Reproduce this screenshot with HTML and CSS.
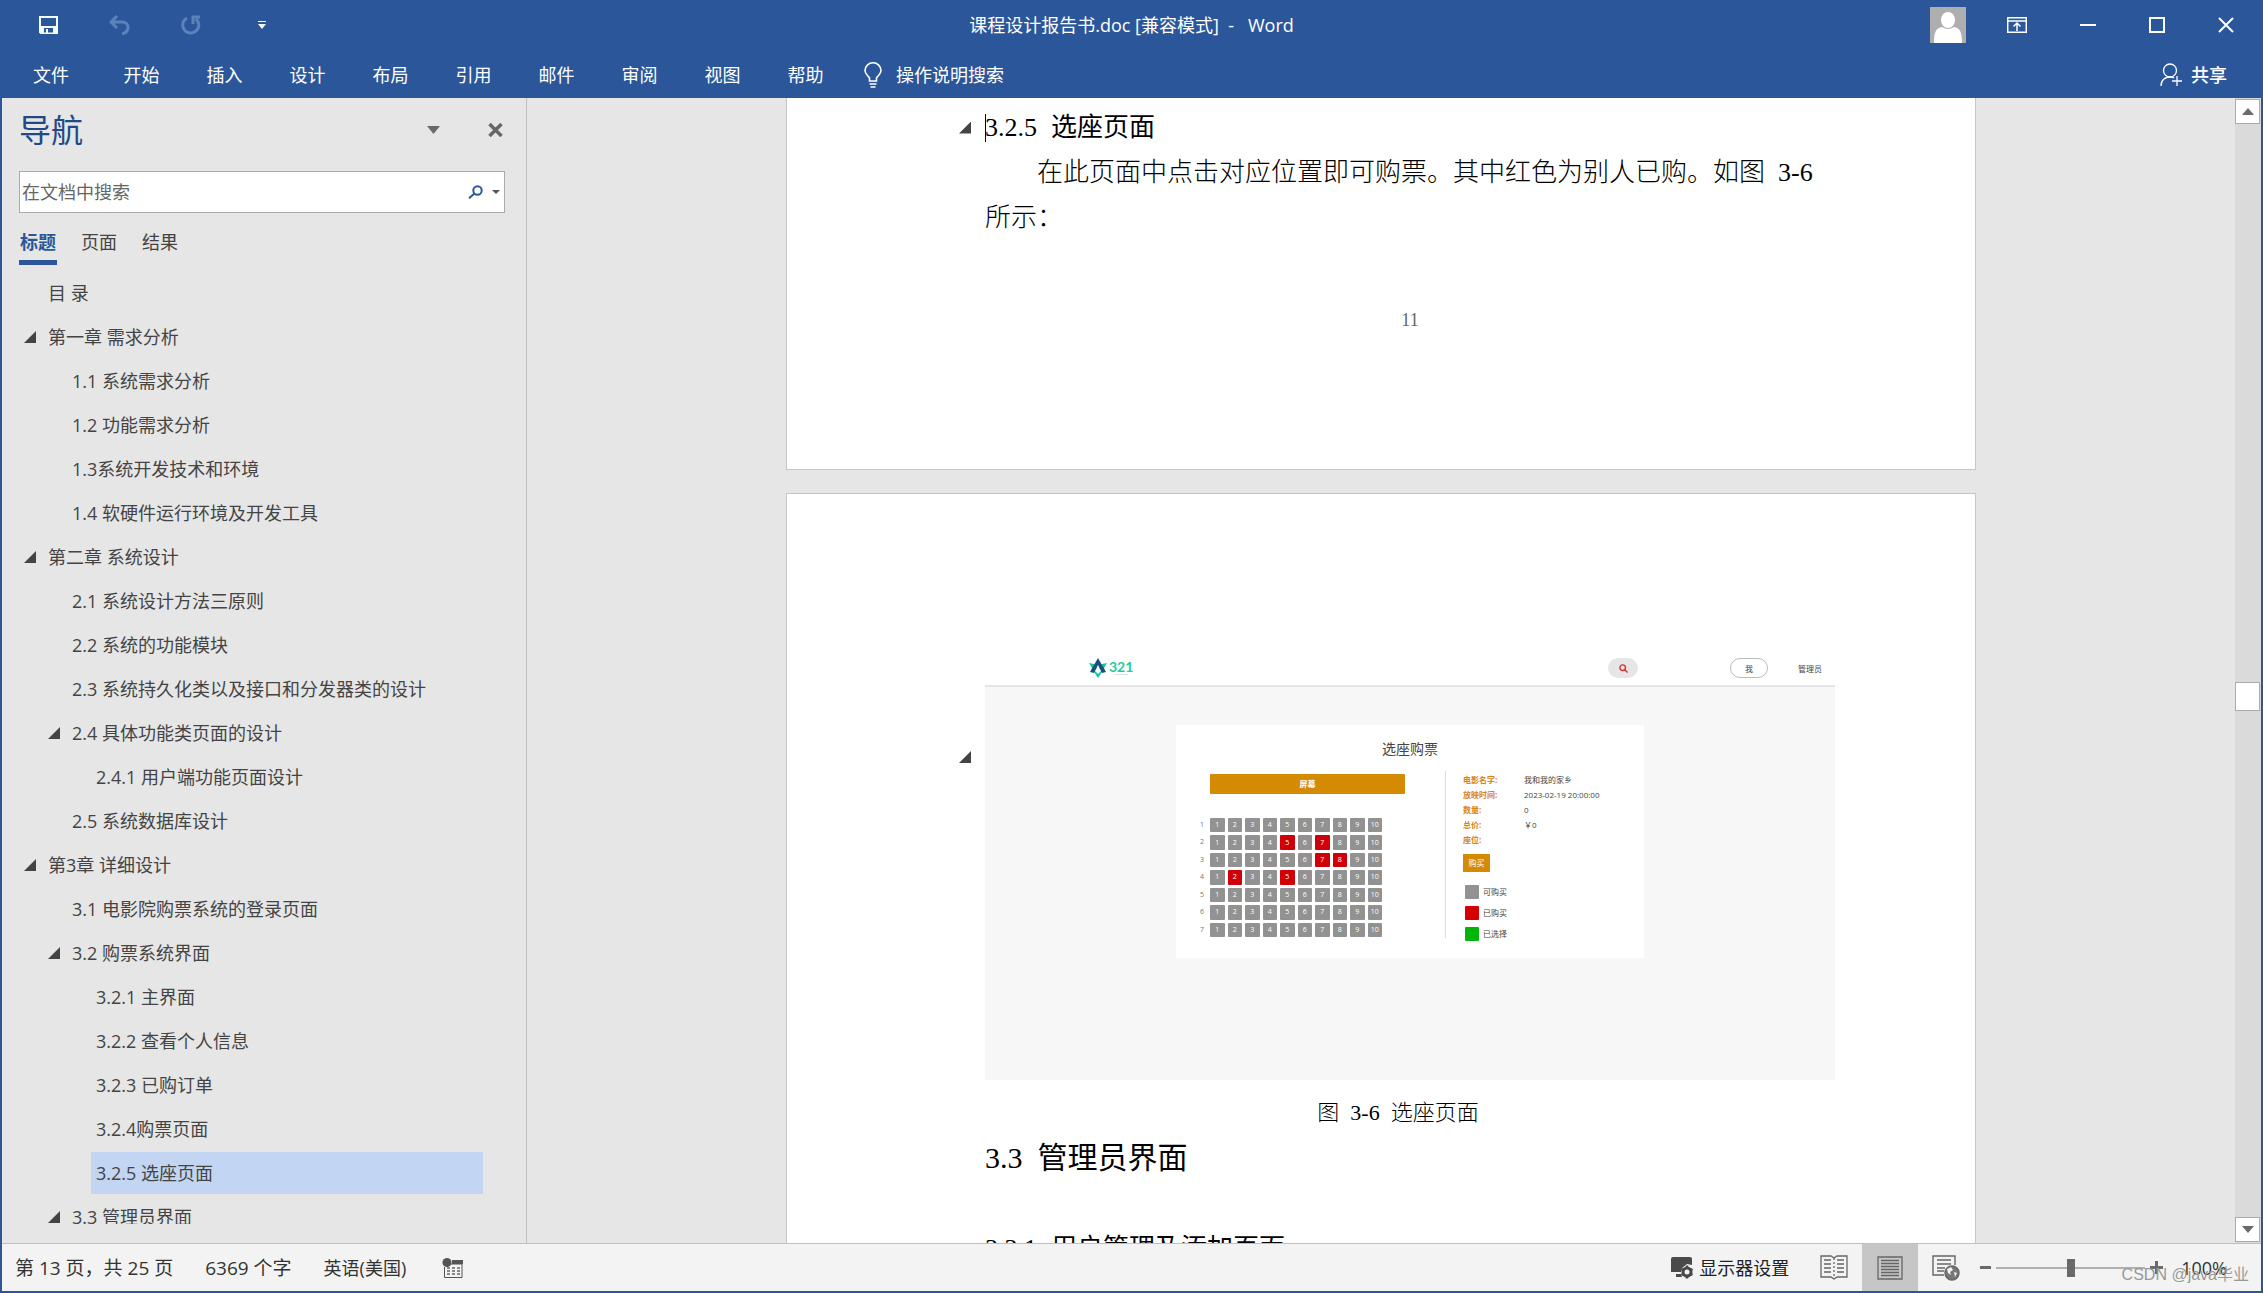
FILE: index.html
```html
<!DOCTYPE html>
<html lang="zh-CN">
<head>
<meta charset="utf-8">
<title>课程设计报告书.doc [兼容模式] - Word</title>
<link rel="stylesheet" href="styles.css">
</head>
<body>
<div class="window">
  <header class="ribbon">
    <div class="titlebar">
      <div class="quick">
        <button class="icon-btn" aria-label="保存"><svg width="20" height="20" viewBox="0 0 20 20"><path d="M0 1h19v18H1.500L0 17.500z" fill="#f4fbff"/><path d="M2 3h15v8H2zM5 13h9v4.500H9V14H7v3.500H5z" fill="#2b579a"/></svg></button>
        <button class="icon-btn" aria-label="撤消"><svg width="22" height="20" viewBox="0 0 22 20" fill="none" stroke="#5c82b9" stroke-width="3"><path d="M8 1L2 7l6 6M2 7h11c8 0 8 10 0 12"/></svg></button>
        <button class="icon-btn" aria-label="重复"><svg width="20" height="20" viewBox="0 0 20 20" fill="none" stroke="#5c82b9" stroke-width="3"><path d="M6 3a8 8 0 1 0 9 1M11 2h8M12 1v8"/></svg></button>
        <button class="icon-btn customize" aria-label="自定义快速访问工具栏"><svg width="8" height="8" viewBox="0 0 8 8"><path d="M0 0h8v1H0zM0 3h8L4 8z" fill="#fff"/></svg></button>
      </div>
      <h1 class="title">课程设计报告书.doc [兼容模式]&nbsp; -&nbsp;&nbsp; Word</h1>
      <div class="controls">
        <button class="icon-btn" aria-label="帐户"><svg width="36" height="36" viewBox="0 0 36 36"><path d="M0 0h36v36H0z" fill="#aeaeae"/><ellipse cx="18" cy="13" rx="7" ry="8" fill="#fff"/><path d="M4 36c0-11 2-15 8-16q6 4 12 0c6 1 8 5 8 16z" fill="#fff"/></svg></button>
        <button class="icon-btn" aria-label="功能区显示选项"><svg width="20" height="16" viewBox="0 0 20 16" fill="none" stroke="#fff" stroke-width="1.500"><path d="M.7.7h18.600v14.600H.7zM.7 4h18.600M10 14V6M6.500 9.500L10 6l3.500 3.500"/></svg></button>
        <button class="icon-btn" aria-label="最小化"><svg width="16" height="16" viewBox="0 0 16 16"><path d="M0 7h16v2H0z" fill="#fff"/></svg></button>
        <button class="icon-btn" aria-label="最大化"><svg width="16" height="16" viewBox="0 0 16 16"><path d="M1 1h14v14H1z" fill="none" stroke="#fff" stroke-width="2"/></svg></button>
        <button class="icon-btn" aria-label="关闭"><svg width="16" height="16" viewBox="0 0 16 16"><path d="M1 1l14 14M15 1L1 15" stroke="#fff" stroke-width="2"/></svg></button>
      </div>
    </div>
    <nav class="menu">
      <button class="menu-tab menu-file">文件</button>
      <button class="menu-tab">开始</button>
      <button class="menu-tab">插入</button>
      <button class="menu-tab">设计</button>
      <button class="menu-tab">布局</button>
      <button class="menu-tab">引用</button>
      <button class="menu-tab">邮件</button>
      <button class="menu-tab">审阅</button>
      <button class="menu-tab">视图</button>
      <button class="menu-tab">帮助</button>
      <button class="tell-me"><svg width="18" height="26" viewBox="0 0 18 26" fill="none" stroke="#fff" stroke-width="1.600"><path d="M5.500 19v-3C4 13.500 1 12 1 8.500a8 7.700 0 0 1 16 0c0 3.500-3 5-4.500 7.500v3zM5.500 22h7M6.500 25h5"/></svg>操作说明搜索</button>
      <button class="share"><svg width="23" height="24" viewBox="0 0 23 24" fill="none" stroke="#fff" stroke-width="1.300"><circle cx="10" cy="7.500" r="6.500"/><path d="M1 23c0-6 4-9 9-9 2 0 3 0 4 1M17 13v10M12 18h10"/></svg>共享</button>
    </nav>
  </header>

  <main class="workspace">
    <aside class="nav-pane">
      <div class="nav-head">
        <h2 class="nav-title">导航</h2>
        <button class="icon-btn" aria-label="任务窗格选项"><svg width="13" height="8" viewBox="0 0 13 8"><path d="M0 0h13L6.500 8z" fill="#6a6a6a"/></svg></button>
        <button class="icon-btn" aria-label="关闭导航"><svg width="15" height="14" viewBox="0 0 15 14"><path d="M1.500 1l12 12M13.500 1l-12 12" stroke="#666" stroke-width="3.500"/></svg></button>
      </div>
      <div class="search">
        <input class="search-input" type="text" placeholder="在文档中搜索" aria-label="在文档中搜索">
        <button class="icon-btn" aria-label="搜索"><svg width="15" height="14" viewBox="0 0 15 14" fill="none" stroke="#2b579a" stroke-width="2"><circle cx="9.500" cy="5.500" r="4.200"/><path d="M6.500 8.500L1 13.300"/></svg></button>
        <button class="icon-btn" aria-label="搜索选项"><svg width="8" height="4" viewBox="0 0 8 4"><path d="M0 0h8L4 4z" fill="#555"/></svg></button>
      </div>
      <div class="nav-tabs">
        <button class="nav-tab active">标题</button>
        <button class="nav-tab">页面</button>
        <button class="nav-tab">结果</button>
      </div>
      <ul class="tree">
        <li class="l1"><a href="#">目 录</a></li>
        <li class="l1 open"><a href="#">第一章 需求分析</a></li>
        <li class="l2"><a href="#">1.1 系统需求分析</a></li>
        <li class="l2"><a href="#">1.2 功能需求分析</a></li>
        <li class="l2"><a href="#">1.3系统开发技术和环境</a></li>
        <li class="l2"><a href="#">1.4 软硬件运行环境及开发工具</a></li>
        <li class="l1 open"><a href="#">第二章 系统设计</a></li>
        <li class="l2"><a href="#">2.1 系统设计方法三原则</a></li>
        <li class="l2"><a href="#">2.2 系统的功能模块</a></li>
        <li class="l2"><a href="#">2.3 系统持久化类以及接口和分发器类的设计</a></li>
        <li class="l2 open"><a href="#">2.4 具体功能类页面的设计</a></li>
        <li class="l3"><a href="#">2.4.1 用户端功能页面设计</a></li>
        <li class="l2"><a href="#">2.5 系统数据库设计</a></li>
        <li class="l1 open"><a href="#">第3章 详细设计</a></li>
        <li class="l2"><a href="#">3.1 电影院购票系统的登录页面</a></li>
        <li class="l2 open"><a href="#">3.2 购票系统界面</a></li>
        <li class="l3"><a href="#">3.2.1 主界面</a></li>
        <li class="l3"><a href="#">3.2.2 查看个人信息</a></li>
        <li class="l3"><a href="#">3.2.3 已购订单</a></li>
        <li class="l3"><a href="#">3.2.4购票页面</a></li>
        <li class="l3"><a class="current" href="#">3.2.5 选座页面</a></li>
        <li class="l2 open"><a href="#">3.3 管理员界面</a></li>
      </ul>
    </aside>

    <section class="canvas">
      <article class="page page-first">
        <h3 class="doc-h3"><i class="fold"></i><i class="caret"></i><span>3.2.5</span><span class="cjk">选座页面</span></h3>
        <p class="doc-p">在此页面中点击对应位置即可购票。其中红色为别人已购。如图&nbsp; 3-6 所示：</p>
        <p class="page-no">11</p>
      </article>
      <article class="page page-next">
        <div class="figure">
          <i class="fold"></i>
          <div class="shot">
            <div class="shot-head">
              <svg class="logo" width="18" height="20" viewBox="0 0 18 20"><path d="M0 5l5 1 4 5 4-5 5-1-3 5 1 3-3 1-4 6-4-6-3-1 1-3z" fill="#12c99b"/><path d="M9 0l8 14-4 1-4-8-4 8-4-1z" fill="#1c4f80"/><path d="M9 8l3 5-3 3-3-3z" fill="#fff"/></svg>
              <div class="brand"><b>321</b><small>MOVIE TICKET</small></div>
              <button class="pill pill-search" aria-label="搜索影片"><svg width="9" height="9" viewBox="0 0 9 9" fill="none" stroke="#d9302c" stroke-width="1.400"><circle cx="3.700" cy="3.700" r="2.800"/><path d="M5.800 5.800L8.500 8.500"/></svg></button>
              <button class="pill pill-user">我</button>
              <a class="admin" href="#">管理员</a>
            </div>
            <div class="shot-body">
              <div class="card">
                <h4 class="card-title">选座购票</h4>
                <div class="card-cols">
                  <div class="hall">
                    <div class="screen">屏幕</div>
                    <div class="seats">
                      <span>1</span><button>1</button><button>2</button><button>3</button><button>4</button><button>5</button><button>6</button><button>7</button><button>8</button><button>9</button><button>10</button>
                      <span>2</span><button>1</button><button>2</button><button>3</button><button>4</button><button class="sold">5</button><button>6</button><button class="sold">7</button><button>8</button><button>9</button><button>10</button>
                      <span>3</span><button>1</button><button>2</button><button>3</button><button>4</button><button>5</button><button>6</button><button class="sold">7</button><button class="sold">8</button><button>9</button><button>10</button>
                      <span>4</span><button>1</button><button class="sold">2</button><button>3</button><button>4</button><button class="sold">5</button><button>6</button><button>7</button><button>8</button><button>9</button><button>10</button>
                      <span>5</span><button>1</button><button>2</button><button>3</button><button>4</button><button>5</button><button>6</button><button>7</button><button>8</button><button>9</button><button>10</button>
                      <span>6</span><button>1</button><button>2</button><button>3</button><button>4</button><button>5</button><button>6</button><button>7</button><button>8</button><button>9</button><button>10</button>
                      <span>7</span><button>1</button><button>2</button><button>3</button><button>4</button><button>5</button><button>6</button><button>7</button><button>8</button><button>9</button><button>10</button>
                    </div>
                  </div>
                  <div class="order">
                    <dl class="facts">
                      <dt>电影名字:</dt><dd>我和我的家乡</dd>
                      <dt>放映时间:</dt><dd>2023-02-19 20:00:00</dd>
                      <dt>数量:</dt><dd>0</dd>
                      <dt>总价:</dt><dd>￥0</dd>
                      <dt>座位:</dt><dd></dd>
                    </dl>
                    <button class="buy">购买</button>
                    <ul class="legend">
                      <li><i></i>可购买</li>
                      <li><i class="sold"></i>已购买</li>
                      <li><i class="picked"></i>已选择</li>
                    </ul>
                  </div>
                </div>
              </div>
            </div>
          </div>
        </div>
        <p class="caption"><span>图</span><span>3-6</span><span>选座页面</span></p>
        <h2 class="doc-h2"><span>3.3</span><span class="cjk">管理员界面</span></h2>
        <h3 class="doc-h3 doc-h3-last"><span>3.3.1</span><span class="cjk">用户管理及添加页面</span></h3>
      </article>
    </section>

    <div class="scrollbar">
      <button class="scroll-btn" aria-label="向上滚动"><svg width="12" height="7" viewBox="0 0 12 7"><path d="M0 7h12L6 0z" fill="#6a6a6a"/></svg></button>
      <div class="track-before"></div>
      <div class="thumb"></div>
      <div class="track-after"></div>
      <button class="scroll-btn" aria-label="向下滚动"><svg width="12" height="7" viewBox="0 0 12 7"><path d="M0 0h12L6 7z" fill="#6a6a6a"/></svg></button>
    </div>
  </main>

  <footer class="status">
    <span class="count">第 13 页，共 25 页</span>
    <span class="count words">6369 个字</span>
    <span>英语(美国)</span>
    <button class="icon-btn macro" aria-label="宏录制"><svg width="21" height="20" viewBox="0 0 21 20"><path d="M10 2h11v4H10z" fill="#555"/><path d="M2.500 9v10.500h17.500V6H8" fill="none" stroke="#555"/><circle cx="5" cy="4.500" r="4.500" fill="#555"/><path d="M5 10h3M10 10h3M15 10h3M5 13h3M10 13h3M15 13h3M5 16h3M10 16h3M15 16h3" stroke="#666" stroke-width="1.500"/></svg></button>
    <button class="display"><svg width="23" height="22" viewBox="0 0 23 22"><path d="M0 2q0-2 2-2h17q2 0 2 2v6l-5-1-5 4-1 4H0zM5 17h5l1 3H5z" fill="#4a4a4a"/><circle cx="16" cy="15" r="4" fill="none" stroke="#4a4a4a" stroke-width="3"/><path d="M16 8.500v3M16 18.500v3M10.500 12l2.500 1.500M19 16.500l2.500 1.500M10.500 18l2.500-1.500M19 13.500l2.500-1.500" stroke="#4a4a4a" stroke-width="2.500"/></svg>显示器设置</button>
    <button class="view" aria-label="阅读视图"><svg width="28" height="25" viewBox="0 0 28 25" fill="none" stroke="#666" stroke-width="1.300"><path d="M1 1h10l3 2 3-2h10v21H17l-3 2-3-2H1zM4 5h7M4 9h7M4 13h7M4 17h7M17 5h7M17 9h7M17 13h7M17 17h7"/><path d="M14 3v20" stroke-dasharray="2 2"/></svg></button>
    <button class="view on" aria-label="页面视图"><svg width="26" height="24" viewBox="0 0 26 24" fill="none" stroke="#666" stroke-width="1.300"><path d="M1 1h24v22H1zM4 4.500h18M4 7.500h18M4 10.500h18M4 13.500h18M4 16.500h18M4 19.500h18"/></svg></button>
    <button class="view" aria-label="Web 版式视图"><svg width="28" height="26" viewBox="0 0 28 26" fill="none" stroke="#666" stroke-width="1.400"><path d="M12 20H1V1h22v9M5 5h14M5 9h14M5 13h8M5 16h7"/><circle cx="20" cy="18" r="7" fill="#777"/><path d="M15 14l4-2 2 3-3 2 1 3-3-2zM22 17l3 1-2 4z" fill="#f3f3f3" stroke="none"/></svg></button>
    <div class="zoom">
      <button class="icon-btn" aria-label="缩小"><svg width="11" height="3" viewBox="0 0 11 3"><path d="M0 0h11v3H0z" fill="#6a6a6a"/></svg></button>
      <input class="zoom-range" type="range" min="0" max="100" value="50" aria-label="显示比例">
      <button class="icon-btn" aria-label="放大"><svg width="13" height="13" viewBox="0 0 13 13"><path d="M5 0h3v5h5v3H8v5H5V8H0V5h5z" fill="#6a6a6a"/></svg></button>
      <span class="percent">100%</span>
    </div>
  </footer>
  <div class="watermark">CSDN @java毕业</div>
</div>
</body>
</html>
```
FILE: styles.css
```css
* { box-sizing: border-box; }
body {
  margin: 0;
  font: 18px/24px "Open Sans", "Noto Sans CJK SC", sans-serif;
  color: #444;
}
h1, h2, h3, h4, p, ul, dl, dd { margin: 0; padding: 0; font-weight: 400; }
ul { list-style: none; }
button { margin: 0; padding: 0; border: 0; background: none; font: inherit; color: inherit; }
a { color: inherit; text-decoration: none; }
svg { display: block; flex: none; }

.window {
  position: relative;
  display: flex;
  flex-direction: column;
  height: 100vh;
  border: solid #2b579a;
  border-width: 0 2px 2px;
  overflow: hidden;
}
.icon-btn { display: flex; flex: none; }

/* Title bar and ribbon tabs */
.ribbon { flex: none; background: #2b579a; color: #fff; }
.titlebar { display: grid; grid-template-columns: 1fr auto 1fr; align-items: center; height: 52px; padding-bottom: 2px; }
.quick { display: flex; align-items: center; gap: 50px; padding-left: 37px; }
.customize { margin-left: 7px; }
.title { font-size: 18px; line-height: 24px; }
.controls { display: flex; align-items: center; justify-content: flex-end; gap: 53px; padding-right: 27px; }
.controls .icon-btn:first-child { margin-right: -12px; }
.menu { display: flex; align-items: center; height: 46px; }
.menu-tab { width: 83px; height: 46px; }
.menu-file { width: 98px; }
.tell-me { display: flex; align-items: center; gap: 14px; margin-left: 17px; }
.share { display: flex; align-items: center; gap: 8px; margin-left: auto; padding-right: 34px; font-weight: 500; }

.workspace { flex: 1; min-height: 0; display: flex; background: #e6e6e6; }

/* Navigation pane */
.nav-pane {
  flex: none;
  width: 525px;
  padding: 0 21px 19px 17px;
  border-right: 1px solid #c0c0c0;
  display: flex;
  flex-direction: column;
}
.nav-head { display: flex; align-items: center; gap: 48px; height: 63px; padding-right: 2px; }
.nav-title { margin-right: auto; font-size: 32px; line-height: 40px; color: #1f4a86; }
.search {
  display: flex;
  align-items: center;
  gap: 9px;
  height: 42px;
  margin-top: 10px;
  padding-right: 4px;
  background: #fff;
  border: 1px solid #ababab;
}
.search-input { flex: 1; min-width: 0; padding: 0 2px; border: 0; outline: 0; background: none; font: inherit; }
.search-input::placeholder { color: #666; opacity: 1; }
.nav-tabs { display: flex; gap: 23px; margin-top: 15px; }
.nav-tab { height: 37px; padding: 0 1px 5px; border-bottom: 5px solid transparent; }
.nav-tab.active { color: #2b579a; font-weight: 700; border-color: #2b579a; }
.tree { flex: 1; min-height: 0; margin-top: 6px; overflow: hidden; }
.tree li { display: flex; align-items: center; height: 44px; padding-right: 22px; }
.tree a { flex: 1; height: 42px; padding-left: 5px; line-height: 42px; white-space: nowrap; }
.tree .current { background: #c2d5f2; }
.tree .l1 { padding-left: 24px; }
.tree .l2 { padding-left: 48px; }
.tree .l3 { padding-left: 72px; }
.tree .open::before {
  content: "";
  width: 12px;
  height: 12px;
  margin-left: -19px;
  margin-right: 7px;
  background: #444;
  clip-path: polygon(100% 0, 100% 100%, 0 100%);
}

/* Document */
.canvas {
  flex: 1;
  min-width: 0;
  display: flex;
  flex-direction: column;
  align-items: center;
  gap: 23px;
  overflow: hidden;
}
.page {
  flex: none;
  width: 100%;
  max-width: 1190px;
  padding: 0 140px 0 198px;
  background: #fff;
  border: 1px solid #c6c6c6;
  color: #000;
  font-family: "Liberation Serif", "Noto Sans CJK SC", serif;
}
.page-first { padding-top: 7px; padding-bottom: 137px; border-top: 0; }
.page-next { padding-top: 157px; padding-bottom: 138px; }
.fold { flex: none; width: 12px; height: 12px; margin: 0 14px 0 -26px; background: #444; clip-path: polygon(100% 0, 100% 100%, 0 100%); }
.caret { width: 1px; height: 28px; margin-right: -1px; background: #000; }
.doc-h3 { display: flex; align-items: center; font-size: 26px; line-height: 45px; }
.doc-h3 .cjk { margin-left: 14px; }
.doc-h3-last { margin-top: 41px; }
.doc-h2 { display: flex; gap: 15px; font-size: 30px; line-height: 54px; }
.cjk { font-weight: 400; }
.doc-p { font-size: 26px; line-height: 45px; text-indent: 52px; font-weight: 300; }
.page-no { margin-top: 68px; font-size: 18px; line-height: 24px; text-align: center; color: #666; }
.caption { display: flex; justify-content: center; gap: 11px; margin-top: 15px; padding-right: 24px; font-size: 22px; line-height: 36px; font-weight: 300; }

/* Ticketing site shown in the figure */
.figure { display: flex; align-items: flex-start; }
.figure .fold { margin-top: 100px; }
.shot { flex: 1; font: 8px/15px "Open Sans", "Noto Sans CJK SC", sans-serif; color: #444; }
.shot-head { display: flex; align-items: center; height: 36px; padding: 0 13px 0 104px; border-bottom: 2px solid #e6e6e6; }
.brand { display: flex; flex-direction: column; margin-left: 2px; color: #17cfa0; font-family: Lato, sans-serif; }
.brand b { font-size: 14px; line-height: 12px; font-weight: 700; }
.brand small { font-size: 2px; line-height: 3px; color: #88b8b0; text-align: center; }
.pill { display: flex; align-items: center; justify-content: center; height: 20px; border-radius: 10px; }
.pill-search { width: 30px; margin-left: auto; background: #e6e6e6; }
.pill-user { width: 38px; margin-left: 92px; border: 1px solid #bbb; }
.admin { margin-left: 30px; }
.shot-body { height: 393px; padding-top: 38px; background: #f7f7f7; }
.card { width: 468px; height: 233px; margin: 0 auto; padding: 14px 0 0 21px; background: #fff; }
.card-title { padding-right: 21px; font-size: 14px; line-height: 20px; text-align: center; }
.card-cols { display: flex; margin-top: 12px; }
.hall { width: 249px; height: 167px; padding-top: 3px; border-right: 1px solid #ddd; }
.screen { width: 195px; margin-left: 13px; border-radius: 1px; background: #d58a04; color: #fff; font-weight: 700; line-height: 20px; text-align: center; }
.seats {
  display: grid;
  grid-template-columns: 10px repeat(10, 1fr);
  grid-template-rows: repeat(7, 1fr);
  gap: 3px;
  width: 185px;
  height: 119px;
  margin-top: 24px;
  font-size: 7px;
  line-height: 14px;
}
.seats span { color: #777; text-align: center; }
.seats button { border-radius: 1px; background: #929292; color: #fff; }
.seats .sold { background: #cf0007; }
.order { padding: 1px 0 0 17px; }
.facts { display: grid; grid-template-columns: 61px auto; grid-auto-rows: 15px; }
.facts dt { color: #d98310; font-weight: 700; }
.buy { display: block; width: 27px; height: 18px; margin-top: 7px; background: #d58a04; color: #fff; line-height: 18px; }
.legend { display: grid; gap: 7px; margin: 13px 0 0 2px; }
.legend li { display: flex; gap: 4px; line-height: 14px; }
.legend i { width: 14px; height: 14px; border-radius: 1px; background: #929292; }
.legend .sold { background: #d40000; }
.legend .picked { background: #00b50c; }

/* Vertical scrollbar */
.scrollbar { flex: none; display: flex; flex-direction: column; width: 26px; padding: 1px 1px 1px 0; background: #dadada; }
.scroll-btn { display: flex; flex: none; align-items: center; justify-content: center; height: 25px; background: #fff; border: 1px solid #ababab; }
.track-before { flex: 559; }
.thumb { flex: none; height: 29px; background: #fff; border: 1px solid #ababab; }
.track-after { flex: 506; }

/* Status bar */
.status {
  flex: none;
  display: flex;
  align-items: center;
  height: 48px;
  padding-left: 13px;
  background: #f3f3f3;
  border-top: 1px solid #c0c0c0;
  color: #333;
}
.count { font-size: 19px; }
.words { margin: 0 32px; }
.macro { margin-left: 36px; }
.display { display: flex; align-items: center; gap: 5px; margin-left: auto; margin-right: 17px; color: #222; }
.view { display: flex; align-items: center; justify-content: center; width: 56px; height: 47px; }
.view.on { background: #c6c6c6; }
.zoom { display: flex; align-items: center; gap: 5px; padding: 0 34px 0 6px; }
.zoom-range { width: 149px; height: 18px; margin: 0; appearance: none; background: linear-gradient(#b0b0b0, #b0b0b0) center / 100% 2px no-repeat; }
.zoom-range::-webkit-slider-thumb { appearance: none; width: 8px; height: 18px; background: #6a6a6a; }
.percent { margin-left: 13px; }
.watermark { position: absolute; right: 12px; bottom: 4px; font-size: 16px; line-height: 24px; color: #999; font-family: "Liberation Sans", "Noto Sans CJK SC", sans-serif; }
```
